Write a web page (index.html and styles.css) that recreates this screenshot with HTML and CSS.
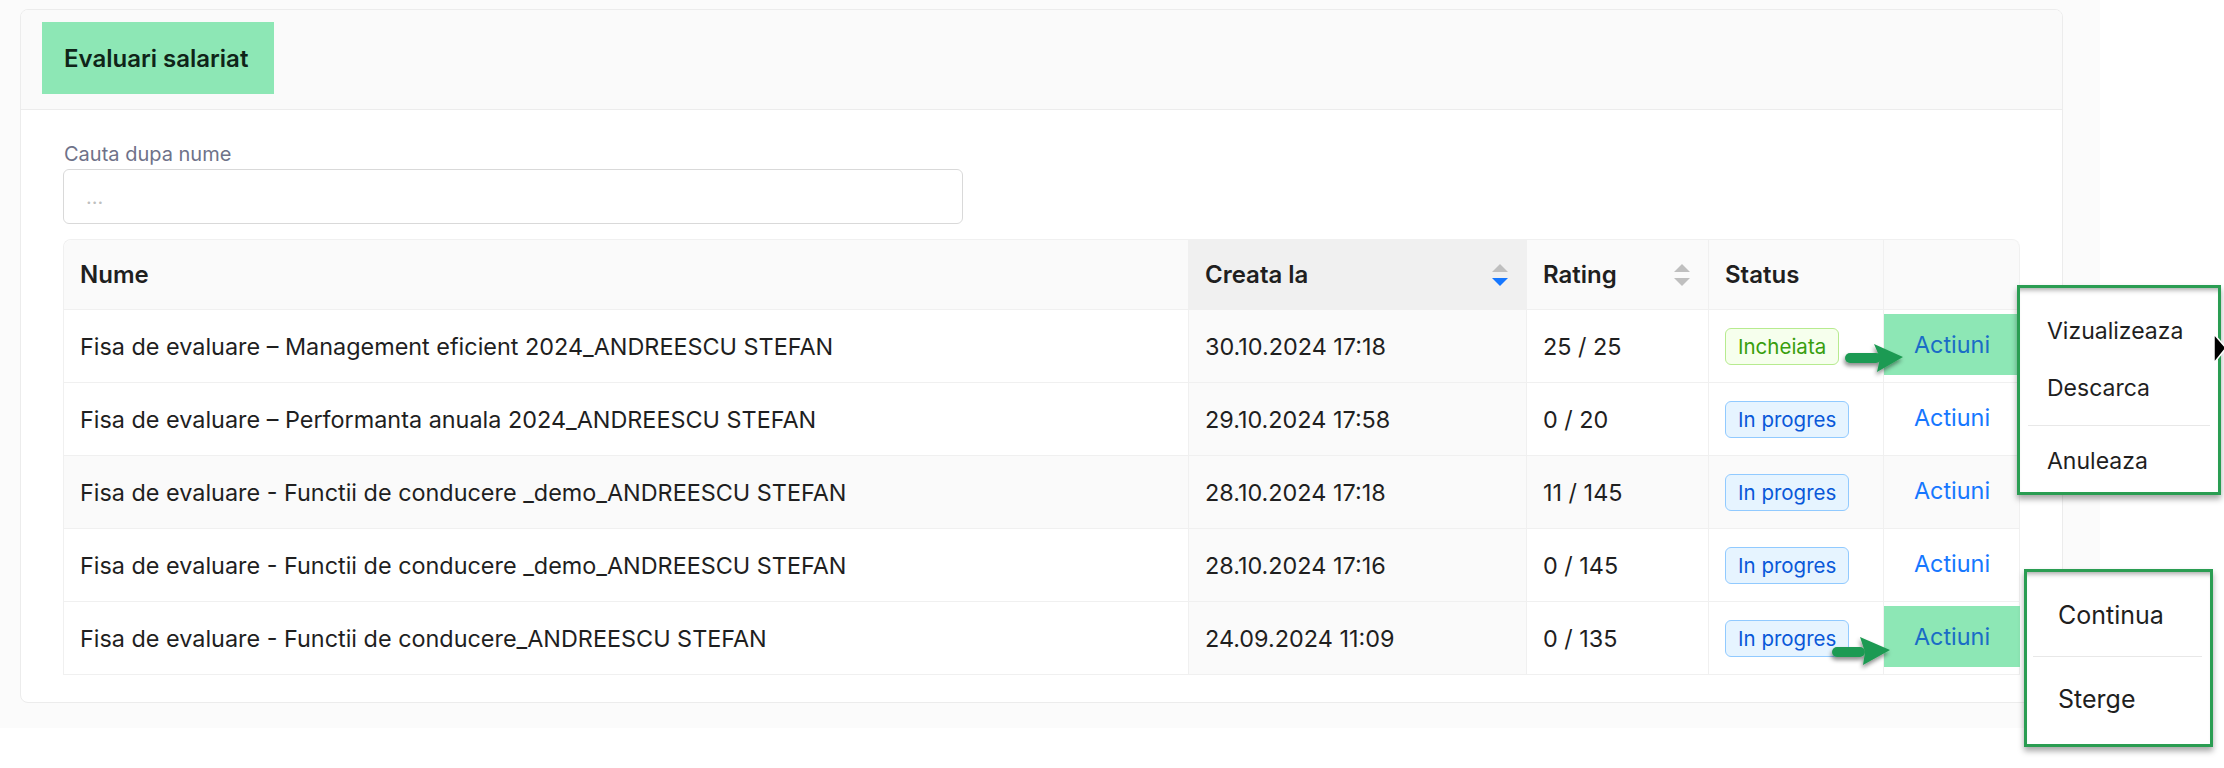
FILE: index.html
```html
<!DOCTYPE html>
<html lang="ro">
<head>
<meta charset="utf-8">
<title>Evaluari salariat</title>
<link rel="stylesheet" href="styles.css">
</head>
<body>
<div class="page">
  <section class="card">
    <header class="card-head">
      <h1 class="badge-title">Evaluari salariat</h1>
    </header>
    <div class="card-body">
      <label class="field-label" for="q">Cauta dupa nume</label>
      <input id="q" class="field-input" type="text" placeholder="...">
      <table class="grid">
        <colgroup>
          <col class="c-name"><col class="c-date"><col class="c-rating"><col class="c-status"><col class="c-act">
        </colgroup>
        <thead>
          <tr>
            <th>Nume</th>
            <th class="sorted"><div class="th-sort"><span>Creata la</span><span class="sorter"><i class="up"></i><i class="down on"></i></span></div></th>
            <th><div class="th-sort"><span>Rating</span><span class="sorter"><i class="up"></i><i class="down"></i></span></div></th>
            <th>Status</th>
            <th></th>
          </tr>
        </thead>
        <tbody>
          <tr>
            <td>Fisa de evaluare – Management eficient 2024_ANDREESCU STEFAN</td>
            <td class="sorted">30.10.2024 17:18</td>
            <td>25 / 25</td>
            <td><span class="tag done">Incheiata</span></td>
            <td class="act"><a class="act-link hl">Actiuni</a></td>
          </tr>
          <tr>
            <td>Fisa de evaluare – Performanta anuala 2024_ANDREESCU STEFAN</td>
            <td class="sorted">29.10.2024 17:58</td>
            <td>0 / 20</td>
            <td><span class="tag prog">In progres</span></td>
            <td class="act"><a class="act-link">Actiuni</a></td>
          </tr>
          <tr class="hover">
            <td>Fisa de evaluare - Functii de conducere _demo_ANDREESCU STEFAN</td>
            <td class="sorted">28.10.2024 17:18</td>
            <td>11 / 145</td>
            <td><span class="tag prog">In progres</span></td>
            <td class="act"><a class="act-link">Actiuni</a></td>
          </tr>
          <tr>
            <td>Fisa de evaluare - Functii de conducere _demo_ANDREESCU STEFAN</td>
            <td class="sorted">28.10.2024 17:16</td>
            <td>0 / 145</td>
            <td><span class="tag prog">In progres</span></td>
            <td class="act"><a class="act-link">Actiuni</a></td>
          </tr>
          <tr>
            <td>Fisa de evaluare - Functii de conducere_ANDREESCU STEFAN</td>
            <td class="sorted">24.09.2024 11:09</td>
            <td>0 / 135</td>
            <td><span class="tag prog">In progres</span></td>
            <td class="act"><a class="act-link hl">Actiuni</a></td>
          </tr>
        </tbody>
      </table>
    </div>
  </section>

  <svg class="arrow arrow-1" width="70" height="44" viewBox="0 0 70 44">
    <defs>
      <filter id="sh" x="-30%" y="-30%" width="160%" height="190%">
        <feDropShadow dx="-1" dy="3" stdDeviation="2" flood-color="#000" flood-opacity="0.45"/>
      </filter>
    </defs>
    <g filter="url(#sh)" fill="#1f9a52">
      <rect x="5" y="15" width="36" height="10" rx="5"/>
      <path d="M34 6 L63 19 L37 34 L40 20 Z"/>
    </g>
  </svg>
  <svg class="arrow arrow-2" width="70" height="44" viewBox="0 0 70 44">
    <g filter="url(#sh)" fill="#1f9a52">
      <rect x="5" y="16" width="33" height="10" rx="5"/>
      <path d="M33 6 L63 19 L36 34 L38 21 Z"/>
    </g>
  </svg>

  <div class="menu menu-1">
    <div class="menu-item">Vizualizeaza</div>
    <div class="menu-item">Descarca</div>
    <div class="menu-sep"></div>
    <div class="menu-item">Anuleaza</div>
  </div>
  <div class="menu menu-2">
    <div class="menu-item">Continua</div>
    <div class="menu-sep"></div>
    <div class="menu-item">Sterge</div>
  </div>

  <svg class="cursor" width="14" height="32" viewBox="0 0 14 32">
    <path d="M1 1 L13 15 L1 30 Z" fill="#000" stroke="#fff" stroke-width="1.5"/>
  </svg>
</div>
</body>
</html>
```

FILE: styles.css
```css
* { box-sizing: border-box; }

html, body {
  margin: 0;
  padding: 0;
  background: #ffffff;
}

body {
  font-family: Inter, "Noto Sans", "Liberation Sans", sans-serif;
  color: #1f1f1f;
  width: 2224px;
  height: 768px;
  overflow: hidden;
}

.page {
  position: relative;
  width: 2100px;
  height: 728px;
  background: #fbfbfb;
  padding: 9px 37px 0 20px;
}

.card {
  background: #ffffff;
  border: 1px solid #ececec;
  border-radius: 8px;
  width: 2043px;
  height: 694px;
  overflow: hidden;
}

.card-head {
  height: 100px;
  background: #fafafa;
  border-bottom: 1px solid #ececec;
  display: flex;
  align-items: center;
  padding: 0 21px;
}

.badge-title {
  margin: 0;
  height: 72px;
  width: 232px;
  background: #8de7b5;
  color: #0f2418;
  font-size: 24px;
  font-weight: 600;
  display: flex;
  align-items: center;
  padding-left: 22px;
  margin-top: -3px;
}

.card-body {
  padding: 30px 43px 0 42px;
  display: flex;
  flex-direction: column;
}

.field-label {
  font-size: 20px;
  line-height: 28px;
  color: #6f7289;
  padding-left: 1px;
}

.field-input {
  margin-top: 1px;
  width: 900px;
  height: 55px;
  border: 1px solid #d9d9d9;
  border-radius: 6px;
  padding: 0 22px;
  font-family: inherit;
  font-size: 20px;
  color: #1f1f1f;
  background: #fff;
  outline: none;
}
.field-input::placeholder { color: #bfbfbf; }

.grid {
  margin-top: 15px;
  width: 1956px;
  border-collapse: separate;
  border-spacing: 0;
  table-layout: fixed;
  font-size: 23.4px;
  border-top: 1px solid #f0f0f0;
  border-left: 1px solid #f0f0f0;
  border-radius: 8px 8px 0 0;
}

.c-name { width: 1125px; }
.c-date { width: 338px; }
.c-rating { width: 182px; }
.c-status { width: 175px; }
.c-act { width: 136px; }

.grid th, .grid td {
  border-right: 1px solid #f0f0f0;
  border-bottom: 1px solid #f0f0f0;
  text-align: left;
  padding: 0 16px;
  white-space: nowrap;
  vertical-align: middle;
}

.grid th {
  height: 70px;
  background: #fafafa;
  font-size: 24px;
  font-weight: 600;
  color: #1f1f1f;
}
.grid thead th:first-child { border-top-left-radius: 8px; }
.grid thead th:last-child { border-top-right-radius: 8px; }

.grid th.sorted { background: #f0f0f0; }

.grid td {
  height: 73px;
  color: #1f1f1f;
}
.grid td.sorted { background: #fafafa; }
.grid tr.hover td { background: #fafafa; }

.th-sort {
  display: flex;
  align-items: center;
  justify-content: space-between;
  padding-right: 2px;
}

.sorter {
  display: flex;
  flex-direction: column;
  gap: 6px;
}
.sorter i {
  display: block;
  width: 0;
  height: 0;
  border-left: 8px solid transparent;
  border-right: 8px solid transparent;
}
.sorter .up { border-bottom: 8px solid #bfbfbf; }
.sorter .down { border-top: 8px solid #bfbfbf; }
.sorter .down.on { border-top-color: #1677ff; }

.tag {
  display: inline-block;
  font-size: 20.5px;
  line-height: 35px;
  padding: 0 12px;
  border-radius: 6px;
  border: 1px solid;
}
.tag.done { color: #389e0d; background: #f6ffed; border-color: #b7eb8f; }
.tag.prog { color: #0958d9; background: #e6f4ff; border-color: #91caff; }

.grid td.act {
  padding: 0;
  text-align: center;
}
.act-link {
  display: flex;
  align-items: center;
  justify-content: center;
  color: #1677ff;
  height: 61px;
  margin: 0 -1px 4px 0;
  cursor: pointer;
}
.act-link.hl {
  background: #8de7b5;
  color: #1a6cc6;
}

.arrow { position: absolute; overflow: visible; }
.arrow-1 { left: 1840px; top: 338px; }
.arrow-2 { left: 1827px; top: 631px; }

.menu {
  position: absolute;
  background: #ffffff;
  border: 3px solid #2a9d52;
  box-shadow: inset 0 6px 5px -4px rgba(0,0,0,0.35), 0 4px 6px rgba(0,0,0,0.35);
}
.menu-1 {
  left: 2017px;
  top: 285px;
  width: 204px;
  height: 210px;
  padding: 15px 8px 0 8px;
  font-size: 23px;
}
.menu-1 .menu-item { line-height: 57px; padding-left: 19px; }
.menu-1 .menu-sep { margin: 8px 0 7px; }

.menu-2 {
  left: 2024px;
  top: 569px;
  width: 189px;
  height: 178px;
  padding: 13px 8px 0 6px;
  font-size: 25px;
}
.menu-2 .menu-item { line-height: 60px; padding-left: 25px; }
.menu-2 .menu-sep { margin: 11px 0 12px; }

.menu-item { color: #1f1f1f; white-space: nowrap; }
.menu-sep { height: 1px; background: #e8e8e8; }

.cursor { position: absolute; left: 2213px; top: 333px; }
```
